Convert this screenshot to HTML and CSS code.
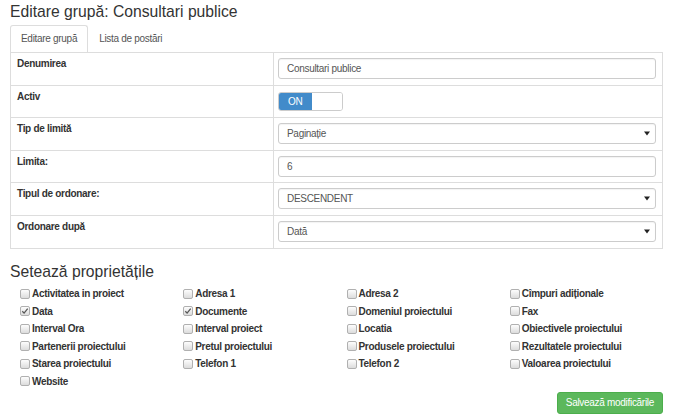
FILE: index.html
```html
<!DOCTYPE html>
<html lang="ro">
<head>
<meta charset="utf-8">
<title>Editare grupă</title>
<link rel="stylesheet" href="styles.css">
</head>
<body>
<h1 class="title">Editare grupă: Consultari publice</h1>
<ul class="tabs">
  <li class="tab active">Editare grupă</li>
  <li class="tab">Lista de postări</li>
</ul>
<table class="form-table">
  <tr>
    <td class="lbl">Denumirea</td>
    <td class="val"><div class="control">Consultari publice</div></td>
  </tr>
  <tr class="short">
    <td class="lbl">Activ</td>
    <td class="val"><div class="toggle"><span class="on">ON</span><span class="off"></span></div></td>
  </tr>
  <tr>
    <td class="lbl">Tip de limită</td>
    <td class="val"><div class="control select"><span>Paginație</span><svg class="caret" width="6" height="5" viewBox="0 0 6 5"><path d="M0 0.5h6L3 4.5z" fill="#222"/></svg></div></td>
  </tr>
  <tr class="short">
    <td class="lbl">Limita:</td>
    <td class="val"><div class="control">6</div></td>
  </tr>
  <tr>
    <td class="lbl">Tipul de ordonare:</td>
    <td class="val"><div class="control select"><span>DESCENDENT</span><svg class="caret" width="6" height="5" viewBox="0 0 6 5"><path d="M0 0.5h6L3 4.5z" fill="#222"/></svg></div></td>
  </tr>
  <tr>
    <td class="lbl">Ordonare după</td>
    <td class="val"><div class="control select"><span>Dată</span><svg class="caret" width="6" height="5" viewBox="0 0 6 5"><path d="M0 0.5h6L3 4.5z" fill="#222"/></svg></div></td>
  </tr>
</table>
<h2 class="subtitle">Setează proprietățile</h2>
<div class="props">
  <label class="prop"><span class="cb"></span>Activitatea in proiect</label>
  <label class="prop"><span class="cb"></span>Adresa 1</label>
  <label class="prop"><span class="cb"></span>Adresa 2</label>
  <label class="prop"><span class="cb"></span>Cîmpuri adiționale</label>
  <label class="prop"><span class="cb"><svg width="8" height="8" viewBox="0 0 8 8"><path d="M1.3 4.3L3.1 6.1L6.7 1.7" fill="none" stroke="#555" stroke-width="1.3"/></svg></span>Data</label>
  <label class="prop"><span class="cb"><svg width="8" height="8" viewBox="0 0 8 8"><path d="M1.3 4.3L3.1 6.1L6.7 1.7" fill="none" stroke="#555" stroke-width="1.3"/></svg></span>Documente</label>
  <label class="prop"><span class="cb"></span>Domeniul proiectului</label>
  <label class="prop"><span class="cb"></span>Fax</label>
  <label class="prop"><span class="cb"></span>Interval Ora</label>
  <label class="prop"><span class="cb"></span>Interval proiect</label>
  <label class="prop"><span class="cb"></span>Locatia</label>
  <label class="prop"><span class="cb"></span>Obiectivele proiectului</label>
  <label class="prop"><span class="cb"></span>Partenerii proiectului</label>
  <label class="prop"><span class="cb"></span>Pretul proiectului</label>
  <label class="prop"><span class="cb"></span>Produsele proiectului</label>
  <label class="prop"><span class="cb"></span>Rezultatele proiectului</label>
  <label class="prop"><span class="cb"></span>Starea proiectului</label>
  <label class="prop"><span class="cb"></span>Telefon 1</label>
  <label class="prop"><span class="cb"></span>Telefon 2</label>
  <label class="prop"><span class="cb"></span>Valoarea proiectului</label>
  <label class="prop"><span class="cb"></span>Website</label>
</div>
<div class="actions">
  <button class="btn-save" type="button">Salvează modificările</button>
</div>
</body>
</html>
```

FILE: styles.css
```css
* { box-sizing: border-box; }

body {
  margin: 0;
  padding: 0 10px;
  font-family: "Liberation Sans", Arial, sans-serif;
  font-size: 10px;
  letter-spacing: -0.3px;
  color: #333;
  background: #fff;
}

.title {
  margin: 1px 0 0;
  font-size: 15.7px;
  font-weight: normal;
  letter-spacing: 0;
  line-height: 22px;
  color: #333;
}

.tabs {
  list-style: none;
  margin: 2px 0 0;
  padding: 0;
  display: flex;
}

.tab {
  padding: 0 10px;
  line-height: 26px;
  height: 27px;
  border: 1px solid transparent;
  border-bottom: none;
  color: #555;
}

.tab.active {
  border-color: #ddd;
  border-radius: 3px 3px 0 0;
}

.form-table {
  width: 100%;
  border-collapse: collapse;
  border: 1px solid #ddd;
}

.form-table td {
  border-top: 1px solid #ddd;
  vertical-align: top;
  height: 33px;
}

.form-table .short td { height: 32px; }

.lbl {
  width: 263px;
  padding: 3px 6px;
  font-weight: bold;
  line-height: 16px;
  border-right: 1px solid #ddd;
}

.val {
  padding: 5px 6px 5px 4px;
}

.control {
  height: 21px;
  border: 1px solid #ccc;
  border-radius: 3px;
  padding: 0 8px;
  line-height: 19px;
  color: #555;
  box-shadow: inset 0 1px 1px rgba(0,0,0,0.05);
  display: flex;
  align-items: center;
  justify-content: space-between;
}

.select { padding-right: 5px; }

.caret { display: block; }

.toggle {
  margin-top: 1px;
  width: 65px;
  height: 19px;
  border: 1px solid #ccc;
  border-radius: 3px;
  display: flex;
  overflow: hidden;
}

.toggle .on {
  width: 33px;
  background: #428bca;
  color: #fff;
  line-height: 17px;
  padding-left: 9px;
}

.toggle .off { flex: 1; background: #fff; }

.subtitle {
  margin: 12px 0 0;
  font-size: 15.7px;
  font-weight: normal;
  letter-spacing: 0;
  line-height: 22px;
  color: #333;
}

.props {
  margin-top: 2px;
  display: grid;
  grid-template-columns: repeat(4, 1fr);
  grid-auto-rows: 17.5px;
}

.prop {
  display: flex;
  align-items: center;
  padding-left: 10px;
  font-weight: bold;
  color: #333;
}

.cb {
  width: 10px;
  height: 10px;
  margin-right: 2px;
  border: 1px solid #b0b0b0;
  border-radius: 2px;
  background: linear-gradient(#fdfdfd, #dcdcdc);
  display: flex;
  align-items: center;
  justify-content: center;
  flex: none;
}

.cb svg { display: block; }

.actions {
  display: flex;
  justify-content: flex-end;
  margin-top: 2px;
}

.btn-save {
  height: 22px;
  padding: 0 8px;
  background: #5cb85c;
  border: 1px solid #4cae4c;
  border-radius: 3px;
  color: #fff;
  font-family: "Liberation Sans", Arial, sans-serif;
  font-size: 10px;
  letter-spacing: -0.3px;
  line-height: 20px;
}
```
